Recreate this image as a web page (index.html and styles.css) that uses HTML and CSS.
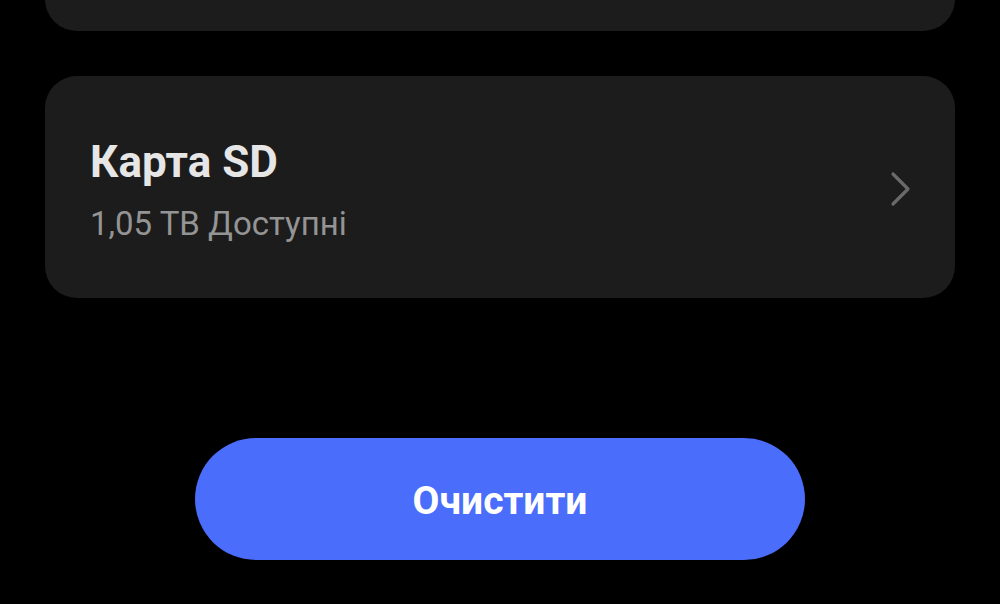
FILE: index.html
```html
<!DOCTYPE html>
<html lang="uk">
<head>
<meta charset="utf-8">
<link rel="stylesheet" href="styles.css">
</head>
<body>
<div class="page">
  <div class="card card-top"></div>
  <div class="card card-sd">
    <div class="texts">
      <div class="title">Карта SD</div>
      <div class="subtitle">1,05 TB Доступні</div>
    </div>
    <svg class="chevron" width="24" height="40" viewBox="0 0 24 40">
      <path d="M4 5 L19 20 L4 35" fill="none" stroke="#6a6a6a" stroke-width="3.2" stroke-linecap="round" stroke-linejoin="round"/>
    </svg>
  </div>
  <div class="actions">
    <button class="btn">Очистити</button>
  </div>
</div>
</body>
</html>
```

FILE: styles.css
```css
html, body {
  margin: 0;
  padding: 0;
  background: #000;
  width: 1000px;
  height: 604px;
  overflow: hidden;
  font-family: Roboto, "Liberation Sans", sans-serif;
}
.page {
  padding: 0 45px;
  display: flex;
  flex-direction: column;
}
.card {
  background: #1c1c1c;
  border-radius: 32px;
}
.card-top {
  height: 200px;
  margin-top: -169px;
}
.card-sd {
  margin-top: 45px;
  height: 222px;
  box-sizing: border-box;
  padding: 0 42px 0 45px;
  display: flex;
  align-items: center;
  justify-content: space-between;
}
.texts {
  display: flex;
  flex-direction: column;
  padding-top: 7px;
}
.title {
  color: #e6e6e6;
  font-size: 44px;
  font-weight: 700;
  line-height: 50px;
}
.subtitle {
  color: #949494;
  font-size: 33px;
  line-height: 40px;
  margin-top: 17px;
}
.chevron {
  display: block;
  margin-top: 4px;
}
.actions {
  display: flex;
  justify-content: center;
  margin-top: 140px;
}
.btn {
  width: 610px;
  height: 122px;
  border: none;
  border-radius: 61px;
  background: #4a6dfb;
  color: #fff;
  font-family: Roboto, "Liberation Sans", sans-serif;
  font-size: 39px;
  font-weight: 700;
  padding: 3px 0 0;
}
```
